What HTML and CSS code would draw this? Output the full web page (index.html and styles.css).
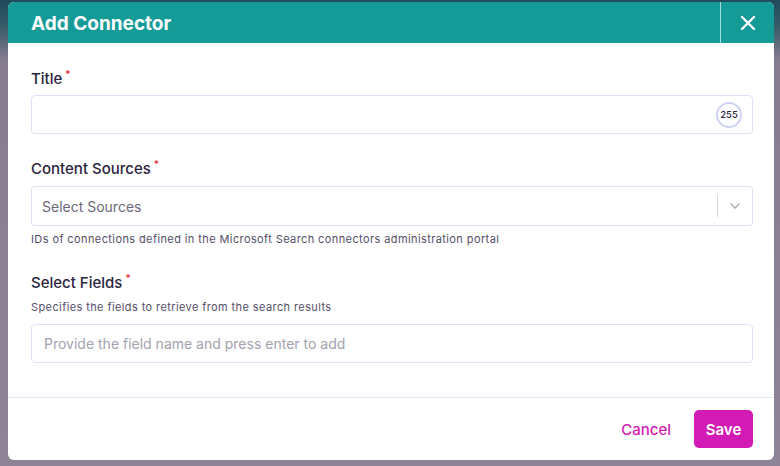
FILE: index.html
```html
<!DOCTYPE html>
<html>
<head>
<meta charset="utf-8">
<link rel="stylesheet" href="styles.css">
</head>
<body>
<div class="dialog">
  <div class="header">
    <div class="title">Add Connector</div>
    <div class="close">
      <svg width="16" height="16" viewBox="0 0 16 16"><path d="M2 2 L14 14 M14 2 L2 14" stroke="#fff" stroke-width="2.4" stroke-linecap="round"/></svg>
    </div>
  </div>
  <div class="content">
    <div class="label">Title<span class="req">*</span></div>
    <div class="input title-input">
      <span class="counter">255</span>
    </div>

    <div class="label l2">Content Sources<span class="req">*</span></div>
    <div class="input select">
      <span class="ph dark">Select Sources</span>
      <span class="sep"></span>
      <svg class="chev" width="12" height="8" viewBox="0 0 12 8"><path d="M1.5 1.5 L6 6 L10.5 1.5" fill="none" stroke="#b5b5bb" stroke-width="1.6"/></svg>
    </div>
    <div class="help">IDs of connections defined in the Microsoft Search connectors administration portal</div>

    <div class="label l3">Select Fields<span class="req">*</span></div>
    <div class="help h2">Specifies the fields to retrieve from the search results</div>
    <div class="input fields">
      <span class="ph">Provide the field name and press enter to add</span>
    </div>
  </div>
  <div class="footer">
    <button class="cancel">Cancel</button>
    <button class="save">Save</button>
  </div>
</div>
</body>
</html>
```
FILE: styles.css
```css
html, body {
  margin: 0;
  padding: 0;
}
body {
  width: 780px;
  height: 466px;
  background: linear-gradient(180deg, #1f4c5b 0px, #3a5c6a 28px, #867c90 60px, #8d8597 100%);
  font-family: "Inter", "Open Sans", sans-serif;
  overflow: hidden;
}
.dialog {
  margin: 2px 0 0 8px;
  width: 766px;
  height: 458px;
  background: #fff;
  border-radius: 6px;
  display: flex;
  flex-direction: column;
  overflow: hidden;
}
.header {
  height: 41px;
  background: #149b98;
  display: flex;
  align-items: center;
  flex-shrink: 0;
}
.title {
  flex: 1;
  padding-left: 23px;
  padding-top: 1px;
  color: #fff;
  font-size: 19px;
  font-weight: 700;
}
.close {
  width: 54px;
  height: 41px;
  border-left: 1.5px solid #a8dcd9;
  display: flex;
  align-items: center;
  justify-content: center;
  box-sizing: border-box;
}
.content {
  padding: 26px 21px 0 23px;
  flex: 1;
  display: flex;
  flex-direction: column;
}
.label {
  font-size: 15px;
  font-weight: 500;
  color: #2b2440;
  height: 20px;
  line-height: 20px;
}
.req {
  color: #e8262f;
  font-size: 10px;
  vertical-align: top;
  margin-left: 3px;
  line-height: 10px;
}
.input {
  border: 1px solid #dde0f6;
  border-radius: 4px;
  box-sizing: border-box;
  display: flex;
  align-items: center;
}
.title-input {
  margin-top: 6px;
  height: 39px;
  justify-content: flex-end;
  padding-right: 10px;
}
.counter {
  width: 26px;
  height: 26px;
  border: 2px solid #cfd3f3;
  border-radius: 50%;
  box-sizing: border-box;
  display: flex;
  align-items: center;
  justify-content: center;
  font-size: 9.5px;
  color: #2b2440;
  font-weight: 500;
}
.l2 { margin-top: 25px; }
.l3 { margin-top: 26px; }
.select {
  margin-top: 7px;
  height: 40px;
  padding-left: 10px;
}
.ph {
  flex: 1;
  font-size: 14px;
  color: #a3a1ae;
}
.ph.dark { color: #6c6878; }
.sep {
  width: 1px;
  height: 22px;
  background: #d6d6d9;
}
.chev {
  margin: 0 11px 0 11px;
}
.help {
  margin-top: 6px;
  font-size: 11px;
  letter-spacing: 0.4px;
  color: #55506a;
  height: 15px;
  line-height: 15px;
}
.h2 { margin-top: 7px; }
.fields {
  margin-top: 9px;
  height: 39px;
  padding-left: 12px;
}
.footer {
  height: 62px;
  border-top: 1px solid #e2e4f8;
  display: flex;
  align-items: center;
  justify-content: flex-end;
  padding-right: 21px;
  gap: 18px;
  flex-shrink: 0;
}
button {
  font-family: inherit;
  font-size: 15px;
  font-weight: 500;
  border: none;
  cursor: pointer;
}
.cancel {
  background: none;
  color: #d21bb4;
  padding: 0 5px;
}
.save {
  background: #d21bb4;
  color: #fff;
  font-weight: 600;
  height: 38px;
  width: 59px;
  border-radius: 5px;
}
```
